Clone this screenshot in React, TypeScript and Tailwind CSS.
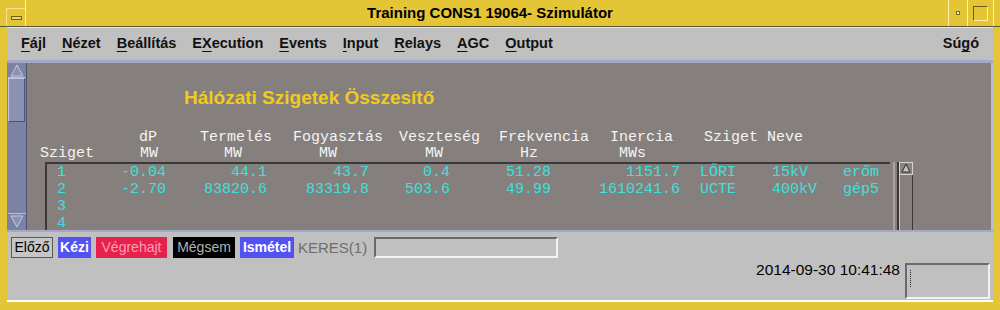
import React from "react";

const mono = "font-['Liberation_Mono','DejaVu_Sans_Mono',monospace] text-[15px]";

const rows: string[][] = [
  ["1", "-0.04", "44.1", "43.7", "0.4", "51.28", "1151.7", "LŐRI", "15kV", "erőm"],
  ["2", "-2.70", "83820.6", "83319.8", "503.6", "49.99", "1610241.6", "UCTE", "400kV", "gép5"],
  ["3"],
  ["4"],
];

const menu = [
  ["F", "ájl"],
  ["N", "ézet"],
  ["B", "eállítás"],
  ["E", "X", "ecution"],
  ["E", "vents"],
  ["I", "nput"],
  ["R", "elays"],
  ["A", "GC"],
  ["O", "utput"],
];

function MenuItem({ parts }: { parts: string[] }) {
  if (parts.length === 3) {
    return (
      <span>
        {parts[0]}
        <span className="underline underline-offset-[3px]">{parts[1]}</span>
        {parts[2]}
      </span>
    );
  }
  return (
    <span>
      <span className="underline underline-offset-[3px]">{parts[0]}</span>
      {parts[1]}
    </span>
  );
}

export default function App() {
  return (
    <div className="w-[1000px] h-[310px] bg-[#e3c536] flex flex-col overflow-hidden font-['Liberation_Sans',Arial,sans-serif] text-black">
      {/* title bar */}
      <div className="h-[27px] flex-none flex border-b border-[#5c5535]">
        <div className="w-[26px] flex-none border-r border-[#fff1a8] flex items-end justify-end">
          <div className="w-[19px] h-[18px] border-t border-l border-[#f8e590] flex items-center justify-center">
            <div className="w-[11px] h-[4px] border border-[#6b5e20] bg-[#f0d660]" />
          </div>
        </div>
        <div className="flex-1 flex items-center justify-center text-[15px] font-bold pl-[6px]">
          Training CONS1 19064- Szimulátor
        </div>
        <div className="w-[19px] flex-none border-l border-[#fff1a8] flex items-center justify-center">
          <div className="w-[4px] h-[4px] bg-[#f8eaa8] border border-[#7a6a28]" />
        </div>
        <div className="w-[26px] flex-none border-l border-[#fff1a8] flex items-center justify-center">
          <div className="w-[15px] h-[15px] border border-t-[#6b5e20] border-l-[#6b5e20] border-r-[#fff1a8] border-b-[#fff1a8]" />
        </div>
        <div className="w-[7px] flex-none border-l border-[#fff1a8]" />
      </div>

      {/* window body */}
      <div className="flex-1 mx-[7px] mb-[8px] bg-[#c0c0c0] flex flex-col border-b-2 border-white">
        {/* menu bar */}
        <div className="h-[33px] flex-none flex items-center pl-[14px] pr-[14px] text-[14.5px] font-bold text-[#111] border-t border-[#e8e8e8]">
          <div className="flex gap-[16px]">
            {menu.map((m, i) => (
              <MenuItem key={i} parts={m} />
            ))}
          </div>
          <div className="ml-auto">
            Sú<span className="underline underline-offset-[3px]">g</span>ó
          </div>
        </div>

        {/* content */}
        <div className="h-[172px] flex-none flex border-t-[3px] border-b-[2px] border-[#a4a8c8]">
          {/* left scrollbar */}
          <div className="w-[20px] flex-none bg-[#7b82a4] border-r border-[#4e5270] flex flex-col px-[1px]">
            <svg width="18" height="15" viewBox="0 0 18 15" className="flex-none">
              <polygon points="9,2 15,13 3,13" fill="#8a91b2" stroke="#c4c9e2" strokeWidth="1" />
              <line x1="0" y1="14.5" x2="18" y2="14.5" stroke="#b8bdd8" />
            </svg>
            <div className="h-[44px] flex-none border border-t-[#c0c6e2] border-l-[#c0c6e2] border-r-[#4e5270] border-b-[#4e5270] bg-[#8a91b2]" />
            <div className="flex-1" />
            <svg width="18" height="17" viewBox="0 0 18 17" className="flex-none">
              <line x1="0" y1="0.5" x2="18" y2="0.5" stroke="#b8bdd8" />
              <polygon points="3,3 15,3 9,14" fill="#8a91b2" stroke="#c4c9e2" strokeWidth="1" />
            </svg>
          </div>

          {/* main panel */}
          <div className="flex-1 bg-[#857f7e] border-r-2 border-[#b8bcd8] flex flex-col overflow-hidden pl-[1px]">
            <div className="ml-[156px] mt-[25px] leading-[20px] text-[19px] font-bold text-[#f0cb1e]">
              Hálózati Szigetek Összesítő
            </div>

            <div className={`${mono} text-[#f4f4f4] leading-[16px] mt-[22px] pl-[12px] whitespace-pre`}>
              <div className="flex">
                <span className="w-[99px]" />
                <span className="w-[61px]">dP</span>
                <span className="w-[93px]">Termelés</span>
                <span className="w-[106px]">Fogyasztás</span>
                <span className="w-[100px]">Veszteség</span>
                <span className="w-[111px]">Frekvencia</span>
                <span className="w-[94px]">Inercia</span>
                <span>Sziget Neve</span>
              </div>
              <div className="flex">
                <span className="w-[100px]">Sziget</span>
                <span className="w-[84px]">MW</span>
                <span className="w-[95px]">MW</span>
                <span className="w-[106px]">MW</span>
                <span className="w-[95px]">MW</span>
                <span className="w-[99px]">Hz</span>
                <span>MWs</span>
              </div>
            </div>

            <div className="flex flex-1 ml-[17px]">
              <div className={`w-[845px] flex-none border-t-2 border-l-2 border-[#3c3838] ${mono} text-[#3ee0dc] leading-[17px] whitespace-pre`}>
                {rows.map((r) => (
                  <div key={r[0]} className="flex h-[17px]">
                    <span className="w-[59px] pl-[10px]">{r[0]}</span>
                    <span className="w-[60px] text-right">{r[1]}</span>
                    <span className="w-[101px] text-right">{r[2]}</span>
                    <span className="w-[102px] text-right">{r[3]}</span>
                    <span className="w-[81px] text-right">{r[4]}</span>
                    <span className="w-[101px] text-right">{r[5]}</span>
                    <span className="w-[129px] text-right">{r[6]}</span>
                    <span className="w-[92px] pl-[20px]">{r[7]}</span>
                    <span className="w-[71px]">{r[8]}</span>
                    <span>{r[9]}</span>
                  </div>
                ))}
              </div>
              <div className="ml-[3px] w-[2px] flex-none bg-[#a8a4a4]" />
              <div className="ml-[2px] w-[16px] flex-none border-l-2 border-[#3c3838] flex flex-col">
                <svg width="14" height="13" viewBox="0 0 14 13" className="flex-none">
                  <rect x="0.5" y="0.5" width="13" height="12" fill="#8a8484" stroke="#d8d4d4" />
                  <polygon points="7,2 11,10 3,10" fill="#c8c4c4" stroke="#2a2a2a" strokeWidth="1" />
                </svg>
                <div className="flex-1 border-l border-r border-l-[#c8c4c4] border-r-[#3c3838]" />
              </div>
            </div>
          </div>
        </div>

        {/* bottom panel */}
        <div className="flex-1 flex flex-col">
          <div className="flex items-center gap-[5px] pt-[4px] pl-[4px] h-[26px] text-[14px] leading-[19px]">
            <div className="w-[42px] h-[21px] flex items-center justify-center bg-[#c6c6c6] border border-[#5a5a5a]">
              Előző
            </div>
            <div className="w-[33px] h-[21px] flex items-center justify-center bg-[#5252f2] text-white font-bold">
              Kézi
            </div>
            <div className="w-[71px] h-[21px] flex items-center justify-center bg-[#e8204c] text-[#f6a0b2]">
              Végrehajt
            </div>
            <div className="w-[62px] h-[21px] flex items-center justify-center bg-black text-[#b0b0b0] ml-[1px]">
              Mégsem
            </div>
            <div className="w-[54px] h-[21px] flex items-center justify-center bg-[#5252f2] text-white font-bold">
              Ismétel
            </div>
            <div className="w-[71px] h-[21px] flex items-center text-[#6e6e6e] -ml-[1px] text-[15px]">
              KERES(1)
            </div>
            <div className="w-[184px] h-[21px] border-t-2 border-l-2 border-[#6a6a6a] border-r-2 border-b-2 border-r-[#f2f2f2] border-b-[#f2f2f2]" />
          </div>
          <div className="flex justify-end items-start pr-[3px] mt-[5px]">
            <div className="text-[15.5px] leading-[16px] mt-[-1px] mr-[5px]">2014-09-30 10:41:48</div>
            <div className="w-[85px] h-[36px] border-t-2 border-l-2 border-[#6a6a6a] border-r-2 border-b-2 border-r-[#f2f2f2] border-b-[#f2f2f2] pl-[3px] pt-[5px]">
              <div className="h-[17px] border-l border-dotted border-[#222]" />
            </div>
          </div>
        </div>
      </div>
    </div>
  );
}
